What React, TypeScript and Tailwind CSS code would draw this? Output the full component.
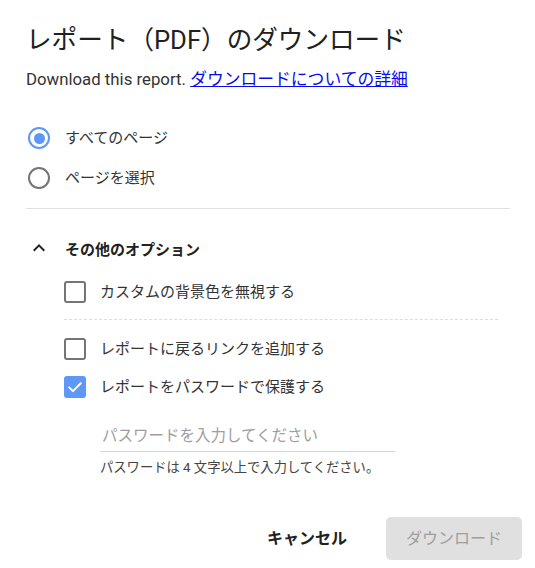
import { useState } from "react";

function Radio({ checked, label }: { checked: boolean; label: string }) {
  return (
    <label className="flex items-center h-[40px] cursor-pointer">
      <span
        className={
          checked
            ? "ml-[2px] w-[22px] h-[22px] rounded-full border-[2.5px] border-[#5e97f6] flex items-center justify-center"
            : "ml-[2px] w-[22px] h-[22px] rounded-full border-[2.5px] border-[#757575] flex items-center justify-center"
        }
      >
        {checked && <span className="w-[11px] h-[11px] rounded-full bg-[#5e97f6]" />}
      </span>
      <span className="ml-[15px] text-[15px] text-[#333333]">{label}</span>
    </label>
  );
}

function Checkbox({ checked, label }: { checked: boolean; label: string }) {
  return (
    <label className="flex items-center h-[38px] ml-[38px] cursor-pointer">
      {checked ? (
        <span className="w-[22px] h-[22px] rounded-[3px] bg-[#5e97f6] flex items-center justify-center">
          <svg viewBox="0 0 24 24" className="w-[20px] h-[20px]" fill="none" stroke="white" strokeWidth={2.4}>
            <path d="M5 12.5l4.5 4.5L19 7.5" strokeLinecap="round" strokeLinejoin="round" />
          </svg>
        </span>
      ) : (
        <span className="w-[22px] h-[22px] rounded-[3px] border-2 border-[#757575]" />
      )}
      <span className="ml-[14px] text-[15px] text-[#333333]">{label}</span>
    </label>
  );
}

export default function App() {
  const [pwd, setPwd] = useState("");

  return (
    <div className="w-[535px] h-[568px] bg-white font-['Roboto','Noto_Sans_CJK_JP',sans-serif] pl-[26px] pr-[25px] pt-[24px]">
      <h1 className="text-[25.6px] leading-[32px] text-[#212121] font-normal">
        レポート（PDF）のダウンロード
      </h1>
      <p className="mt-[11px] text-[16.8px] leading-[24px] text-[#333333]">
        Download this report.{" "}
        <a href="#" className="text-[#0a0aee] underline">
          ダウンロードについての詳細
        </a>
      </p>

      {/* Page selection */}
      <div className="mt-[27px] flex flex-col">
        <Radio checked label="すべてのページ" />
        <Radio checked={false} label="ページを選択" />
      </div>

      <div className="mt-[10px] border-t border-[#e0e0e0]" />

      {/* Other options */}
      <div className="mt-[21px] flex items-center h-[40px]">
        <svg viewBox="0 0 24 24" className="w-[24px] h-[24px] ml-[1px] -mt-[4px]" fill="#212121">
          <path d="M7.41 15.41L12 10.83l4.59 4.58L18 14l-6-6-6 6z" />
        </svg>
        <span className="ml-[14px] text-[15px] font-bold text-[#212121]">その他のオプション</span>
      </div>

      <div className="mt-[3px]">
        <Checkbox checked={false} label="カスタムの背景色を無視する" />
      </div>
      <div className="mt-[8px] ml-[38px] border-t border-dashed border-[#dddddd] mr-[12px]" />
      <div className="mt-[10px] flex flex-col">
        <Checkbox checked={false} label="レポートに戻るリンクを追加する" />
        <Checkbox checked label="レポートをパスワードで保護する" />
      </div>

      <div className="ml-[74px] mt-[15px] w-[295px]">
        <input
          type="password"
          value={pwd}
          onChange={(e) => setPwd(e.target.value)}
          placeholder="パスワードを入力してください"
          className="w-full h-[31px] pl-[2px] border-b border-[#d6d6d6] text-[15.5px] text-[#333333] placeholder:text-[#9e9e9e] outline-none bg-transparent"
        />
      </div>
      <p className="ml-[74px] mt-[7px] text-[13.3px] leading-[18px] text-[#444444]">
        パスワードは 4 文字以上で入力してください。
      </p>

      {/* Actions */}
      <div className="mt-[40px] -mr-[12px] flex justify-end items-center gap-[19px]">
        <button className="h-[43px] px-[20px] rounded-[4px] text-[16px] font-bold text-[#212121]">
          キャンセル
        </button>
        <button
          disabled
          className="h-[43px] w-[136px] rounded-[5px] bg-[#e0e0e0] text-[16px] text-[#9e9e9e]"
        >
          ダウンロード
        </button>
      </div>
    </div>
  );
}
